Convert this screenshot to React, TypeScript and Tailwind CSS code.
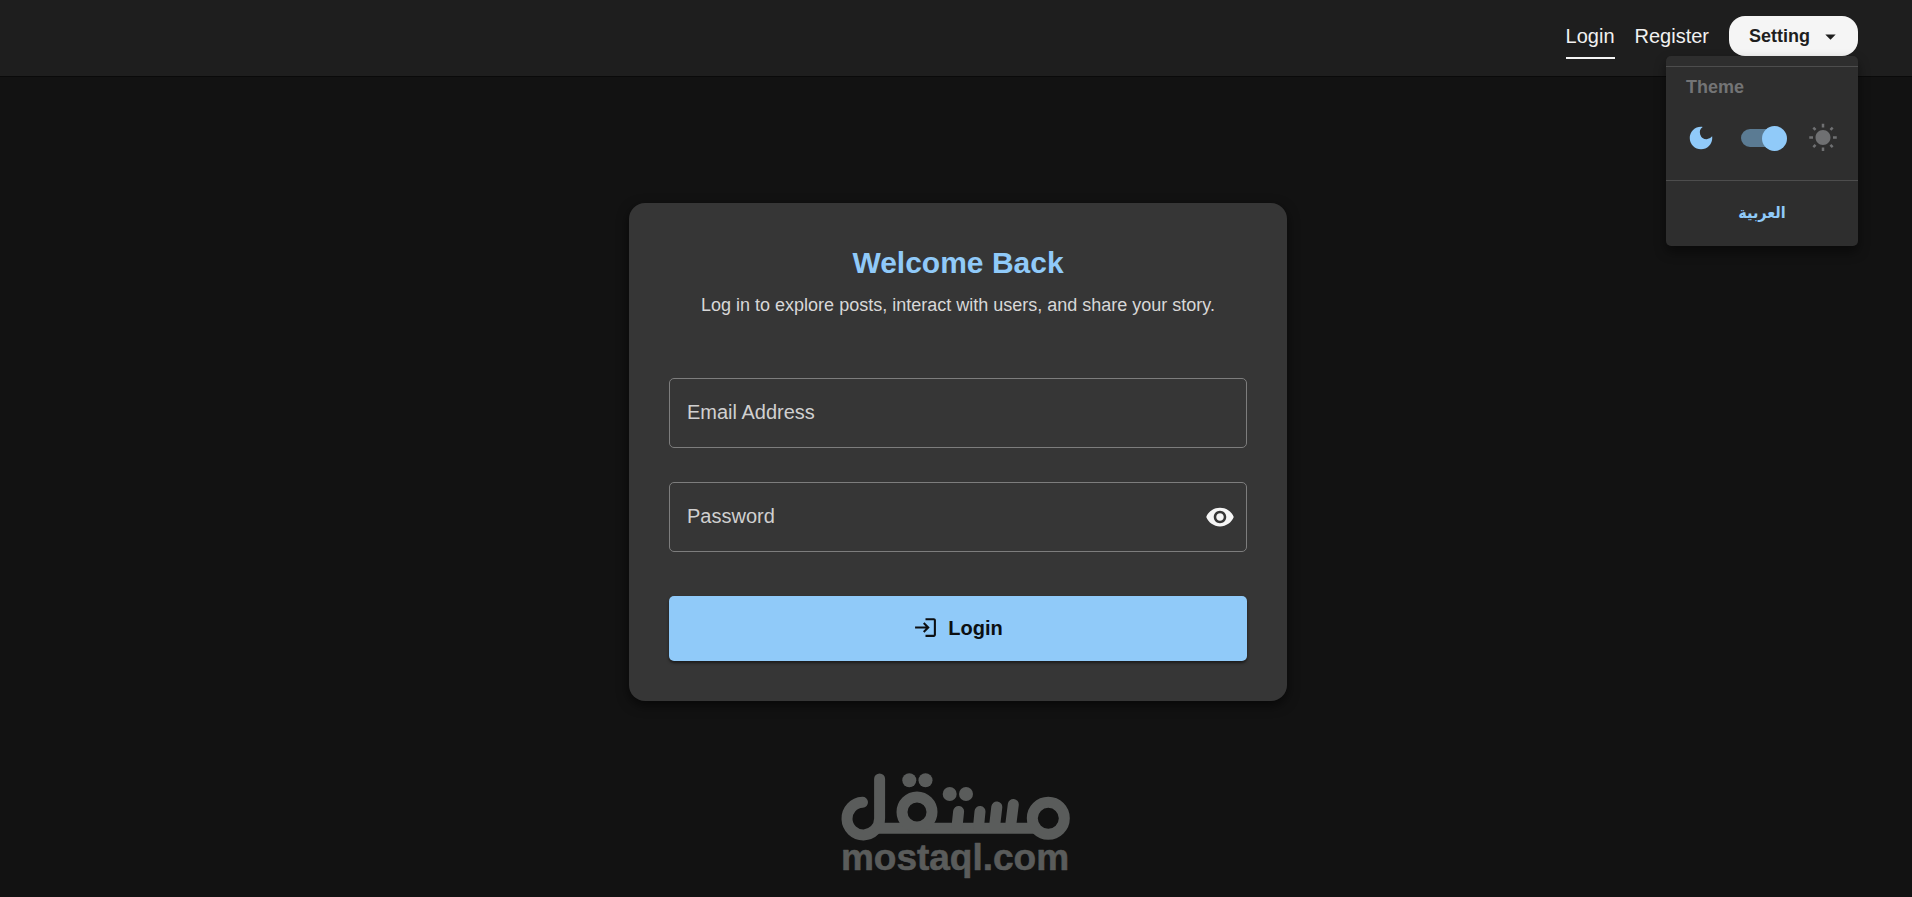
import { useState } from "react";
import { MdArrowDropDown, MdDarkMode, MdLogin, MdVisibility, MdWbSunny } from "react-icons/md";

function SettingMenu() {
  const [dark, setDark] = useState(true);

  return (
    <div className="absolute top-full right-0 z-10 w-48 rounded-[5px] bg-[#2e2e2e] pt-[10px] shadow-[0_6px_12px_rgba(0,0,0,0.45)]">
      <div className="border-t border-[#4d4d4d] px-5 pt-2">
        <div className="text-lg leading-6 font-bold text-[#737475]">Theme</div>
        <div className="flex h-[81px] items-center justify-between pb-[3px]">
          <MdDarkMode className="size-[30px] text-[#90caf9]" />
          <label className="relative flex h-[25px] w-[50px] cursor-pointer items-center pl-1">
            <input
              type="checkbox"
              aria-label="Dark theme"
              checked={dark}
              onChange={() => setDark(!dark)}
              className="peer sr-only"
            />
            <span className="h-[18px] w-[42px] rounded-full bg-[#5b7b93]" />
            <span className="absolute left-0 size-[25px] rounded-full bg-[#90caf9] peer-checked:right-0 peer-checked:left-auto" />
          </label>
          <MdWbSunny className="size-[30px] text-[#6f7072]" />
        </div>
      </div>
      <div className="flex h-[66px] items-center justify-center border-t border-[#4d4d4d]">
        <button
          lang="ar"
          className="pb-[2px] font-['DejaVu_Sans_Condensed','DejaVu_Sans',sans-serif] text-base font-bold text-[#90caf9]"
        >
          العربية
        </button>
      </div>
    </div>
  );
}

function Header() {
  return (
    <header className="flex h-[77px] items-start justify-end border-b border-[#0a0a0a] bg-[#1e1e1e] pt-4 pr-[54px]">
      <nav className="flex items-start gap-5 text-xl text-[#f1f1f1]">
        <a href="#login" className="flex h-[43px] items-start border-b-2 border-[#f5f5f5] pt-[6px]">
          Login
        </a>
        <a href="#register" className="pt-[6px]">
          Register
        </a>
        <div className="relative">
          <button className="flex h-10 w-[129px] items-center justify-between rounded-2xl bg-[#f5f5f5] pr-[15px] pl-5 text-lg font-bold text-[#1e1e1e]">
            Setting
            <MdArrowDropDown className="size-[25px]" />
          </button>
          <SettingMenu />
        </div>
      </nav>
    </header>
  );
}

interface FieldProps {
  id: string;
  label: string;
  type: string;
  children?: React.ReactNode;
}

function Field({ id, label, type, children }: FieldProps) {
  return (
    <div className="relative flex h-[70px] items-center rounded-[5px] border border-[#7d7d7d]">
      <input
        id={id}
        type={type}
        placeholder=" "
        className="peer h-full w-full bg-transparent px-[17px] text-xl text-white outline-none"
      />
      <label
        htmlFor={id}
        className="pointer-events-none absolute left-[17px] pb-[2px] text-xl text-[#d0d0d0] peer-not-placeholder-shown:hidden"
      >
        {label}
      </label>
      {children}
    </div>
  );
}

function LoginCard() {
  const [showPassword, setShowPassword] = useState(false);

  return (
    <form className="w-full max-w-[658px] rounded-2xl bg-[#363636] p-10 shadow-[0_4px_12px_rgba(0,0,0,0.6)]">
      <h1 className="text-center text-3xl leading-10 font-bold text-[#90caf9]">Welcome Back</h1>
      <p className="mt-2 text-center text-lg leading-7 text-[#d8d8d8]">
        Log in to explore posts, interact with users, and share your story.
      </p>
      <div className="mt-[59px] flex flex-col gap-[34px]">
        <Field id="email" label="Email Address" type="email" />
        <Field id="password" label="Password" type={showPassword ? "text" : "password"}>
          <button
            type="button"
            aria-label="Toggle password visibility"
            onClick={() => setShowPassword(!showPassword)}
            className="absolute right-[11px] text-[#f5f5f5]"
          >
            <MdVisibility className="size-[30px]" />
          </button>
        </Field>
      </div>
      <button
        type="submit"
        className="mt-11 flex h-[65px] w-full items-center justify-center gap-[10px] rounded-[5px] bg-[#90caf9] pb-[2px] text-xl font-bold text-[#0c0f12] shadow-[0_2px_3px_rgba(0,0,0,0.5)]"
      >
        <MdLogin className="size-[25px]" />
        Login
      </button>
    </form>
  );
}

function Watermark() {
  return (
    <svg viewBox="0 0 230 106" className="h-[106px] w-[230px]" role="img" aria-label="mostaql.com">
      <g fill="none" stroke="#5a5c5b" strokeWidth="11" strokeLinecap="round" strokeLinejoin="round">
        <path d="M21.5 29.3A16.3 16.3 0 1 0 38.6 45.5V6" />
        <path d="M37 55.3H192" />
        <circle cx="76" cy="39" r="15" />
        <circle cx="207.3" cy="45.3" r="16" />
        <path d="M116 54L117.600 38.500M137.500 54L139 38.500M153.500 54L155.800 34M169.500 54L172.300 31.500" />
      </g>
      <g fill="#5a5c5b">
        <circle cx="68.3" cy="7.2" r="7" />
        <circle cx="84.5" cy="7.2" r="7" />
        <circle cx="108.7" cy="21" r="7" />
        <circle cx="125" cy="21" r="7" />
        <text
          x="114"
          y="97"
          textAnchor="middle"
          fontSize="37"
          fontWeight="700"
          fontFamily="'Liberation Sans', sans-serif"
          stroke="#5a5c5b"
          strokeWidth="0.6"
          strokeLinejoin="round"
        >
          mostaql.com
        </text>
      </g>
    </svg>
  );
}

export default function App() {
  return (
    <div className="flex min-h-screen flex-col bg-[#121212] font-['Liberation_Sans',sans-serif]">
      <Header />
      <main className="flex flex-1 flex-col items-center pt-[126px] pb-4">
        <div className="flex w-full justify-center pr-4 pl-5">
          <LoginCard />
        </div>
        <div className="mt-[72px]">
          <Watermark />
        </div>
      </main>
    </div>
  );
}
